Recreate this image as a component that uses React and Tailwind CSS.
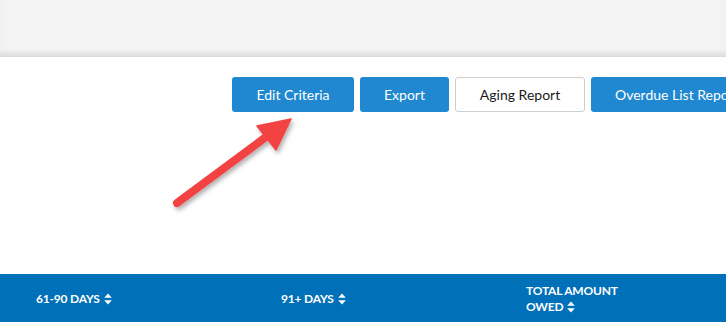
import React from 'react';

function SortIcon() {
  return (
    <svg width="8" height="12" viewBox="0 0 8 12" className="ml-[4px] inline-block">
      <path d="M4 0.5 L7.8 4.8 L0.2 4.8 Z" fill="white" />
      <path d="M4 11.5 L7.8 7.2 L0.2 7.2 Z" fill="white" />
    </svg>
  );
}

function Arrow() {
  return (
    <svg
      className="absolute left-0 top-0 pointer-events-none"
      width="726"
      height="322"
      viewBox="0 0 726 322"
    >
      <defs>
        <filter id="shadow" x="-20%" y="-20%" width="140%" height="140%">
          <feDropShadow dx="2" dy="3" stdDeviation="2" floodColor="#000" floodOpacity="0.3" />
        </filter>
      </defs>
      <g filter="url(#shadow)">
        <line x1="177" y1="203" x2="270" y2="134" stroke="#f24343" strokeWidth="8" strokeLinecap="round" />
        <path d="M291 119 L257 126 L276 150 Z" fill="#f24343" stroke="#f24343" strokeWidth="1.5" strokeLinejoin="round" />
      </g>
    </svg>
  );
}

export default function App() {
  const btn = 'h-[35px] rounded-[3px] text-[14px] flex items-center justify-center shrink-0';

  return (
    <div className="relative w-[726px] h-[322px] overflow-hidden bg-white" style={{ fontFamily: 'Lato, "Open Sans", sans-serif' }}>
      {/* top band */}
      <div className="h-[57px] bg-[#f3f3f3] shadow-[inset_0_-7px_6px_-4px_rgba(0,0,0,0.12)]" />

      {/* action buttons */}
      <div className="flex gap-[6px] pl-[232px] pt-[20px] whitespace-nowrap">
        <button className={`${btn} w-[122px] bg-[#1f88d0] text-white`}>Edit Criteria</button>
        <button className={`${btn} w-[89px] bg-[#1f88d0] text-white`}>Export</button>
        <button className={`${btn} w-[130px] bg-white border border-[#cfcfcf] text-[#1a1a1a]`}>Aging Report</button>
        <button className={`${btn} w-[160px] bg-[#1f88d0] text-white justify-start pl-[24px]`}>Overdue List Report</button>
      </div>

      {/* table header */}
      <div className="absolute left-0 right-0 top-[274px] h-[48px] bg-[#0070b8] text-white font-bold text-[12px] uppercase tracking-[-0.2px]">
        <div className="flex h-full">
          <div className="w-[245px] pl-[36px] flex items-center pt-[2px]">
            <span>61-90 Days</span>
            <SortIcon />
          </div>
          <div className="w-[245px] pl-[36px] flex items-center pt-[2px]">
            <span>91+ Days</span>
            <SortIcon />
          </div>
          <div className="w-[160px] pl-[36px] flex flex-col justify-center leading-[16px] pt-[2px]">
            <span>Total Amount</span>
            <span className="flex items-center">
              Owed
              <SortIcon />
            </span>
          </div>
        </div>
      </div>

      <Arrow />
    </div>
  );
}
